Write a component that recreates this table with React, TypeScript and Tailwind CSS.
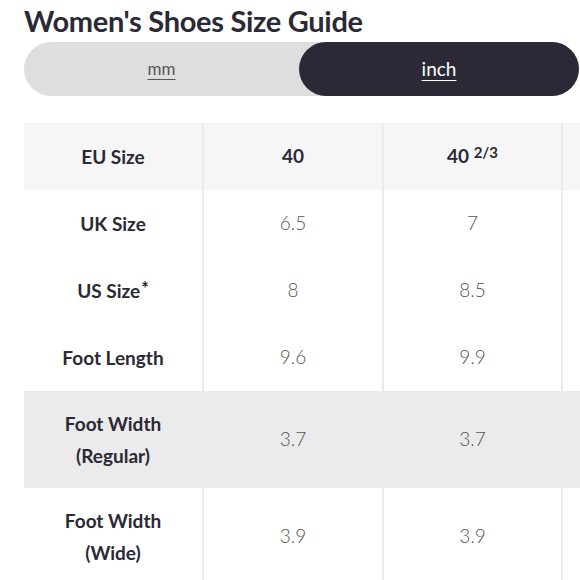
import React from "react";

const font = { fontFamily: "Lato, 'Open Sans', sans-serif" };

type Row = { label: React.ReactNode; values: React.ReactNode[]; tall?: boolean; gray?: boolean; header?: boolean };

const rows: Row[] = [
  {
    label: "EU Size",
    header: true,
    values: [
      "40",
      <span>
        40 <sup className="text-[15px] font-bold relative -top-[5px]">2/3</sup>
      </span>,
    ],
  },
  { label: "UK Size", values: ["6.5", "7"] },
  {
    label: (
      <span>
        US Size<sup className="text-[18px] relative -top-[3px] ml-[1px]">*</sup>
      </span>
    ),
    values: ["8", "8.5"],
  },
  { label: "Foot Length", values: ["9.6", "9.9"] },
  { label: <span>Foot Width<br />(Regular)</span>, values: ["3.7", "3.7"], tall: true, gray: true },
  { label: <span>Foot Width<br />(Wide)</span>, values: ["3.9", "3.9"], tall: true },
];

export default function App() {
  return (
    <div className="w-[580px] h-[580px] overflow-hidden bg-white pl-6 text-[#2a2935]" style={font}>
      <h1 className="text-[29px] leading-[42px] font-bold tracking-[-0.3px] whitespace-nowrap">
        Women's Shoes Size Guide
      </h1>
      <div className="flex h-[54px] w-[555px] rounded-full bg-[#dedede]">
        <div className="w-[275px] flex items-center justify-center text-[17px] text-[#555] underline underline-offset-4">
          mm
        </div>
        <div className="flex-1 rounded-full bg-[#2a2935] flex items-center justify-center text-[19px] text-white underline underline-offset-4">
          inch
        </div>
      </div>
      <div className="mt-[27px] w-[740px]">
        {rows.map((r, i) => (
          <div
            key={i}
            className={`grid grid-cols-[178px_180px_179px_180px] ${r.tall ? "h-[97px]" : "h-[67px]"} ${
              r.header ? "bg-[#f6f6f6]" : r.gray ? "bg-[#ebebeb]" : "bg-white"
            }`}
          >
            <div className="flex items-center justify-center text-center text-[19px] font-bold leading-[32px]">
              {r.label}
            </div>
            {r.values.map((v, j) => (
              <div
                key={j}
                className={`flex items-center justify-center border-l-2 border-[#ebebeb] text-[19px] ${
                  r.header ? "font-bold text-[#2a2935]" : "font-light text-[#555]"
                }`}
              >
                {v}
              </div>
            ))}
            <div className="border-l-2 border-[#ebebeb]" />
          </div>
        ))}
      </div>
    </div>
  );
}
